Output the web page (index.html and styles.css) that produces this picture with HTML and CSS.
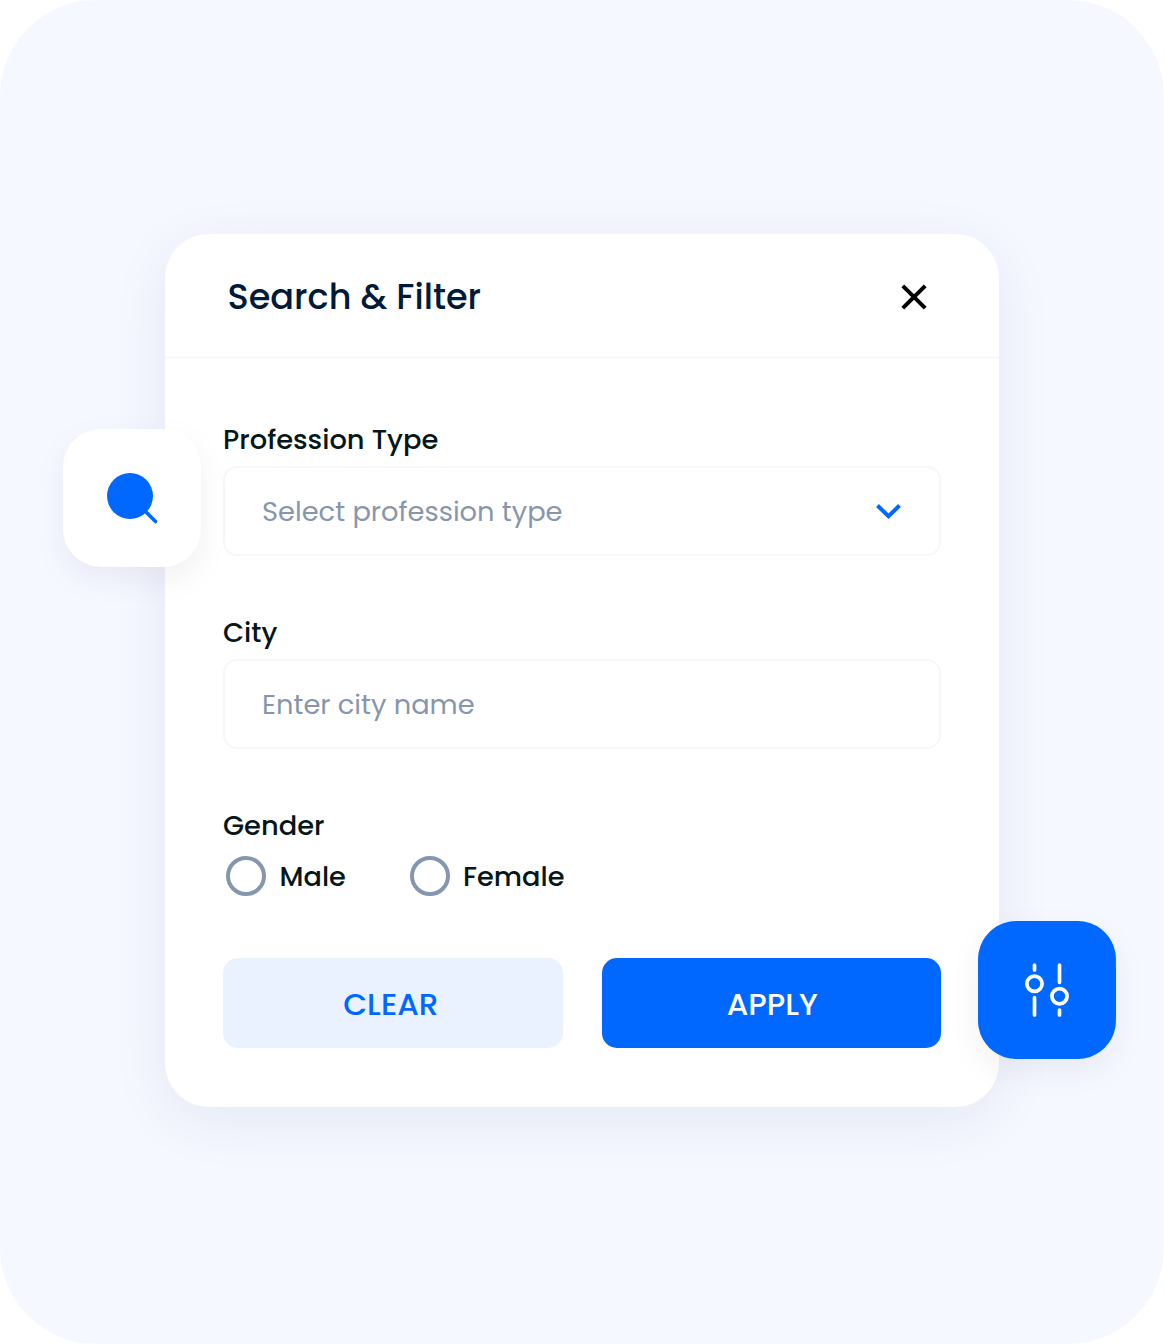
FILE: index.html
```html
<!DOCTYPE html>
<html lang="en">
<head>
<meta charset="utf-8">
<title>Search &amp; Filter</title>
<link rel="stylesheet" href="styles.css">
</head>
<body>
<main class="stage">
  <section class="card">
    <header class="card-header">
      <h1 class="title">Search &amp; Filter</h1>
      <svg class="close" width="28" height="28" viewBox="0 0 28 28"><path d="M2.8 2.8 25.2 25.2M25.2 2.8 2.8 25.2"/></svg>
    </header>
    <form class="form">
      <div class="group">
        <span class="label">Profession Type</span>
        <div class="field">
          <span class="hint">Select profession type</span>
          <svg class="chevron" width="28" height="20" viewBox="0 0 28 20"><path d="M2.5 3.5 13.5 14.3 24.5 3.5"/></svg>
        </div>
      </div>
      <div class="group">
        <span class="label">City</span>
        <div class="field"><span class="hint">Enter city name</span></div>
      </div>
      <div class="group group-gender">
        <span class="label">Gender</span>
        <div class="options">
          <label class="option"><span class="radio"></span><span class="label">Male</span></label>
          <label class="option"><span class="radio"></span><span class="label">Female</span></label>
        </div>
      </div>
      <div class="actions">
        <button class="button button-clear" type="button">CLEAR</button>
        <button class="button button-apply" type="button">APPLY</button>
      </div>
    </form>
    <svg class="tile tile-search" width="138" height="138" viewBox="0 0 138 138">
      <path class="tile-shape" d="M0 48C0 39.1 0 34.6 .74 30.9A38.4 38.4 0 0 1 30.9 .74C34.6 0 39.1 0 48 0H90C98.9 0 103.4 0 107.1 .74A38.4 38.4 0 0 1 137.26 30.9C138 34.6 138 39.1 138 48V90C138 98.9 138 103.4 137.26 107.1A38.4 38.4 0 0 1 107.1 137.26C103.4 138 98.9 138 90 138H48C39.1 138 34.6 138 30.9 137.26A38.4 38.4 0 0 1 .74 107.1C0 103.4 0 98.9 0 90Z"/>
      <circle class="lens" cx="67" cy="67" r="23"/>
      <path class="handle" d="M82 82 92.5 92.5"/>
    </svg>
    <svg class="tile tile-filter" width="138" height="138" viewBox="0 0 138 138">
      <path class="tile-shape" d="M0 48C0 39.1 0 34.6 .74 30.9A38.4 38.4 0 0 1 30.9 .74C34.6 0 39.1 0 48 0H90C98.9 0 103.4 0 107.1 .74A38.4 38.4 0 0 1 137.26 30.9C138 34.6 138 39.1 138 48V90C138 98.9 138 103.4 137.26 107.1A38.4 38.4 0 0 1 107.1 137.26C103.4 138 98.9 138 90 138H48C39.1 138 34.6 138 30.9 137.26A38.4 38.4 0 0 1 .74 107.1C0 103.4 0 98.9 0 90Z"/>
      <g class="sliders">
        <circle cx="56.5" cy="62.7" r="7.6"/>
        <circle cx="81.5" cy="75.3" r="7.6"/>
        <path d="M56.5 44V49M56.5 76.7V94M81.5 44V61.3M81.5 89V94"/>
      </g>
    </svg>
  </section>
</main>
</body>
</html>
```
FILE: styles.css
```css
* { box-sizing: border-box; }

body {
  margin: 0;
  background: #fff;
  font-family: Poppins, Inter, "Liberation Sans", sans-serif;
}

.stage {
  width: 1164px;
  height: 1344px;
  padding: 234px 165px 237px;
  background: #f5f8ff;
  clip-path: path("M0 120C0 97.7 0 86.5 1.85 77.3A96 96 0 0 1 77.3 1.85C86.5 0 97.7 0 120 0H1044C1066.3 0 1077.5 0 1086.7 1.85A96 96 0 0 1 1162.15 77.3C1164 86.5 1164 97.7 1164 120V1224C1164 1246.3 1164 1257.5 1162.15 1266.7A96 96 0 0 1 1086.7 1342.15C1077.5 1344 1066.3 1344 1044 1344H120C97.7 1344 86.5 1344 77.3 1342.15A96 96 0 0 1 1.85 1266.7C0 1257.5 0 1246.3 0 1224Z");
}

.card {
  position: relative;
  height: 873px;
  border-radius: 44px;
  background: #fff;
  box-shadow: 0 14px 60px rgba(20, 35, 80, 0.07);
}

.card-header {
  display: flex;
  align-items: center;
  justify-content: space-between;
  height: 125px;
  padding: 3px 71px 0 62.5px;
  border-bottom: 3px solid #fafafa;
}

.title {
  margin: 0;
  font-size: 35.1px;
  font-weight: 500;
  line-height: 48px;
  color: #001a39;
  white-space: nowrap;
}

.close path {
  fill: none;
  stroke: #000;
  stroke-width: 4;
}

.form {
  display: flex;
  flex-direction: column;
  padding: 61px 58px 0;
}

.group { height: 193px; }

.label {
  display: block;
  font-size: 27.3px;
  font-weight: 500;
  line-height: 40px;
  color: #061619;
  white-space: nowrap;
}

.field {
  display: flex;
  align-items: center;
  justify-content: space-between;
  height: 90px;
  margin-top: 6px;
  padding: 2px 36px 0 37px;
  border: 2px solid #f5f7fa;
  border-radius: 14px;
}

.hint {
  font-size: 27.3px;
  line-height: 40px;
  color: #8796ad;
  white-space: nowrap;
}

.chevron path {
  fill: none;
  stroke: #0067ff;
  stroke-width: 4;
}

.group-gender { height: 152px; }

.options {
  display: flex;
  padding: 9px 3px 0;
}

.option {
  display: flex;
  align-items: center;
  gap: 13.5px;
  width: 183.5px;
}

.option .label {
  padding-top: 2px;
  font-size: 27.2px;
}

.radio {
  flex: none;
  width: 40px;
  height: 40px;
  border: 4px solid #8496b0;
  border-radius: 50%;
}

.actions {
  display: grid;
  grid-template-columns: 1fr 1fr;
  gap: 39px;
}

.button {
  height: 90px;
  padding: 2px 0 0;
  border: 0;
  border-radius: 15px;
  font: inherit;
  font-size: 31px;
  font-weight: 500;
}

.button-clear {
  padding-right: 4px;
  background: #eaf2ff;
  color: #0067ff;
}

.button-apply {
  padding-left: 2px;
  background: #0067ff;
  color: #fff;
}

.tile {
  position: absolute;
  overflow: visible;
}

.tile-shape { filter: drop-shadow(0 12px 14px rgba(10, 20, 50, 0.06)); }

.tile-search {
  left: -102px;
  top: 195px;
}

.tile-search .tile-shape { fill: #fff; }

.lens { fill: #0067ff; }

.handle {
  stroke: #0067ff;
  stroke-width: 3.6;
  stroke-linecap: round;
}

.tile-filter {
  left: 813px;
  top: 687px;
}

.tile-filter .tile-shape { fill: #0067ff; }

.sliders {
  fill: none;
  stroke: #fff;
  stroke-width: 3.7;
  stroke-linecap: round;
}
```
